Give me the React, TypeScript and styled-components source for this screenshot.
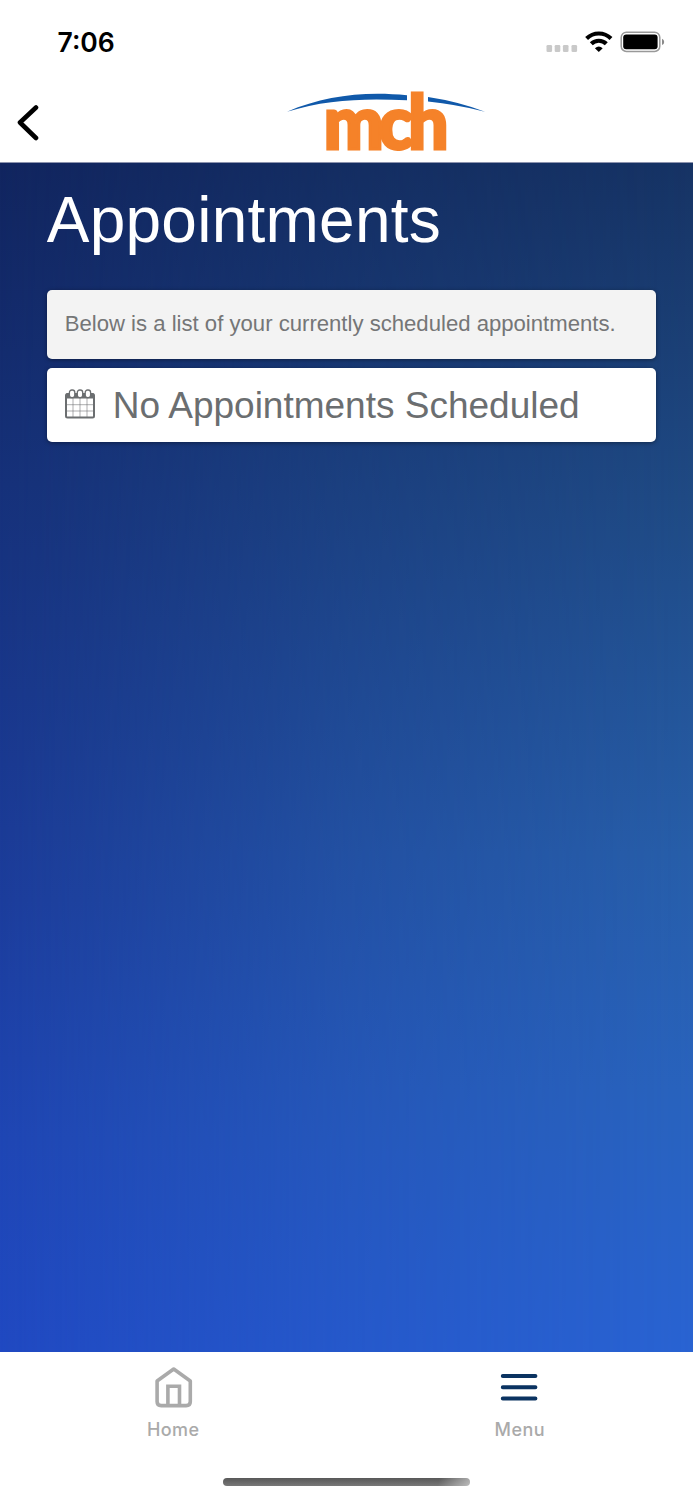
import React from "react";
import styled, { createGlobalStyle } from "styled-components";

const GlobalStyle = createGlobalStyle`
  * { box-sizing: border-box; }
  body { margin: 0; background: #fff; }
`;

const Screen = styled.div`
  display: flex;
  flex-direction: column;
  width: 693px;
  height: 1500px;
  overflow: hidden;
  background: #fff;
  font-family: "Liberation Sans", Arial, sans-serif;
`;

const StatusBar = styled.div`
  display: flex;
  flex: none;
  align-items: center;
  justify-content: space-between;
  height: 84px;
  padding: 0 28px 0 57.5px;
`;

const Time = styled.span`
  font: 600 26.5px/32px Inter, sans-serif;
  letter-spacing: 0;
  color: #000;
`;

const StatusIcons = styled.svg`
  display: block;
  width: 119px;
  height: 24px;
`;

const NavBar = styled.header`
  display: flex;
  flex: none;
  align-items: flex-start;
  height: 79px;
  padding-left: 16px;
  border-bottom: 1px solid #8c93ae;
`;

const BackButton = styled.button`
  display: block;
  width: 24px;
  height: 38px;
  margin: 19px 247px 0 0;
  padding: 0;
  border: 0;
  background: none;
`;

const Logo = styled.svg`
  display: block;
  width: 200px;
  height: 72px;
  overflow: visible;
`;

const Content = styled.main`
  position: relative;
  display: flex;
  flex: none;
  flex-direction: column;
  height: 1189px;
  padding: 20px 37px 0 46.7px;
  background: linear-gradient(#11255f 0%, #16317a 27%, #1c3d9c 62%, #1f46b4 82%, #2049c2 100%);

  &::before {
    content: "";
    position: absolute;
    inset: 0;
    background: linear-gradient(#163364 0%, #1f4a84 28%, #275ea9 58%, #2963bd 78%, #2963d2 100%);
    mask-image: linear-gradient(90deg, transparent, rgba(0, 0, 0, 0.6) 50%, #000);
  }

  > * { position: relative; }
`;

const Title = styled.h1`
  margin: 0 0 33.3px;
  font-size: 64px;
  font-weight: 400;
  line-height: 74px;
  letter-spacing: 0.25px;
  color: #fff;
`;

const Card = styled.section<{ $muted?: boolean }>`
  display: flex;
  align-items: center;
  height: ${(p) => (p.$muted ? "68.3px" : "73.7px")};
  margin-bottom: 9.4px;
  padding: 0 18px;
  border-radius: 5px;
  background: ${(p) => (p.$muted ? "#f3f3f3" : "#fff")};
  box-shadow: 0 1px 4px rgba(0, 0, 0, 0.4);
  color: ${(p) => (p.$muted ? "#757677" : "#6b6e70")};
`;

const Note = styled.p`
  margin: 0;
  font-size: 22.13px;
  line-height: 26px;
  white-space: nowrap;
`;

const Message = styled.p`
  margin: 2px 0 0 18px;
  font-size: 37px;
  line-height: 44px;
  white-space: nowrap;
`;

const CalendarIcon = styled.svg`
  display: block;
  flex: none;
  width: 30px;
  height: 30px;
  margin-bottom: 2px;
`;

const TabBar = styled.nav`
  display: flex;
  flex: none;
  height: 110px;
`;

const Tab = styled.a`
  display: flex;
  flex: 1;
  flex-direction: column;
  align-items: center;
  padding: 13px 0 0;
  font: 500 18px/24px Inter, sans-serif;
  letter-spacing: 0.4px;
  color: #aaa;
`;

const TabIcon = styled.svg`
  display: block;
  width: 40px;
  height: 44px;
  margin-bottom: 8.5px;
`;

const HomeIndicator = styled.div`
  width: 247.5px;
  height: 8.5px;
  margin: 15.7px auto 0 222.7px;
  border-radius: 5px;
  background:
    linear-gradient(100deg, transparent 87%, rgba(255, 255, 255, 0.5) 100%),
    linear-gradient(#585858, #777);
`;

export default function App() {
  return (
    <Screen>
      <GlobalStyle />
      <StatusBar>
        <Time>7:06</Time>
        <StatusIcons viewBox="546 30 119 24">
          <g fill="#c9c9c9">
            {[546.5, 554.7, 562.9, 571.5].map((x) => (
              <rect key={x} x={x} y="45" width="5.6" height="7" rx="1.3" />
            ))}
          </g>
          <g fill="none" stroke="#000" strokeWidth="4.1">
            <path d="M586.6 38.5A17.4 17.4 0 0 1 611 38.5" />
            <path d="M591.3 43.8A10.6 10.6 0 0 1 606.3 43.8" />
          </g>
          <path d="M594.9 48.2Q598.8 44.7 602.7 48.2L598.8 52Z" fill="#000" />
          <rect x="621.2" y="32.2" width="38.6" height="19.2" rx="5.2" fill="none" stroke="#999" strokeWidth="1.5" />
          <rect x="623.2" y="34.4" width="34.4" height="14.8" rx="3" fill="#000" />
          <path d="M662 38.7q2.2 1 2.2 3.2t-2.2 3.2z" fill="#8a8a8a" />
        </StatusIcons>
      </StatusBar>
      <NavBar>
        <BackButton aria-label="Back">
          <svg width="24" height="38" viewBox="0 0 24 38" fill="none" stroke="#000" strokeWidth="4.6" strokeLinecap="round" strokeLinejoin="round">
            <path d="M20 4.5L4 19.5L20 35" />
          </svg>
        </BackButton>
        <Logo viewBox="287 84 200 72" role="img">
          <path d="M287 111.7C325 95.5 365 91 407 95.3V100.3C365 98 326 99.5 287 111.7Z" fill="#1059aa" />
          <path d="M428 97Q458 101.5 485 111.7Q456 104.5 428 101.6Z" fill="#1059aa" />
          <text
            x="323.8"
            y="149.4"
            textLength="120"
            lengthAdjust="spacingAndGlyphs"
            letterSpacing="-5"
            fontFamily="Lato, sans-serif"
            fontWeight="900"
            fontSize="73.5"
            fill="#f58229"
            stroke="#f58229"
            strokeWidth="3"
          >
            mch
          </text>
        </Logo>
      </NavBar>
      <Content>
        <Title>Appointments</Title>
        <Card $muted>
          <Note>Below is a list of your currently scheduled appointments.</Note>
        </Card>
        <Card>
          <CalendarIcon viewBox="0 0 30 30" fill="none" stroke="#6b6e70">
            <g strokeWidth="0.8" opacity="0.7">
              <path d="M8 9V28M15 9V28M22 9V28M1 15.7H29M1 22H29" />
            </g>
            <rect x="1" y="5" width="28" height="23.5" rx="1.5" strokeWidth="2" />
            <path d="M1 4.5H29V9.5H1Z" fill="#6b6e70" stroke="none" />
            <g fill="#fff" strokeWidth="1.3">
              <rect x="4.4" y="1" width="5.4" height="7.7" rx="2.4" />
              <rect x="12.3" y="1" width="5.4" height="7.7" rx="2.4" />
              <rect x="20.2" y="1" width="5.4" height="7.7" rx="2.4" />
            </g>
          </CalendarIcon>
          <Message>No Appointments Scheduled</Message>
        </Card>
      </Content>
      <TabBar>
        <Tab>
          <TabIcon viewBox="0 0 40 44" fill="none" stroke="#aaa" strokeWidth="3.6" strokeLinejoin="round">
            <path d="M20.7 4L37.3 16V36.5Q37.3 40.6 33.2 40.6H8.2Q4.1 40.6 4.1 36.5V16Z" />
            <path d="M14.9 40V21.2H26.5V40" strokeLinejoin="miter" />
          </TabIcon>
          Home
        </Tab>
        <Tab>
          <TabIcon viewBox="0 0 40 44" fill="none" stroke="#0b3361" strokeWidth="4" strokeLinecap="round">
            <path d="M2.8 11.1H35.4M2.8 22.3H35.4M2.8 33.4H35.4" />
          </TabIcon>
          Menu
        </Tab>
      </TabBar>
      <HomeIndicator />
    </Screen>
  );
}
